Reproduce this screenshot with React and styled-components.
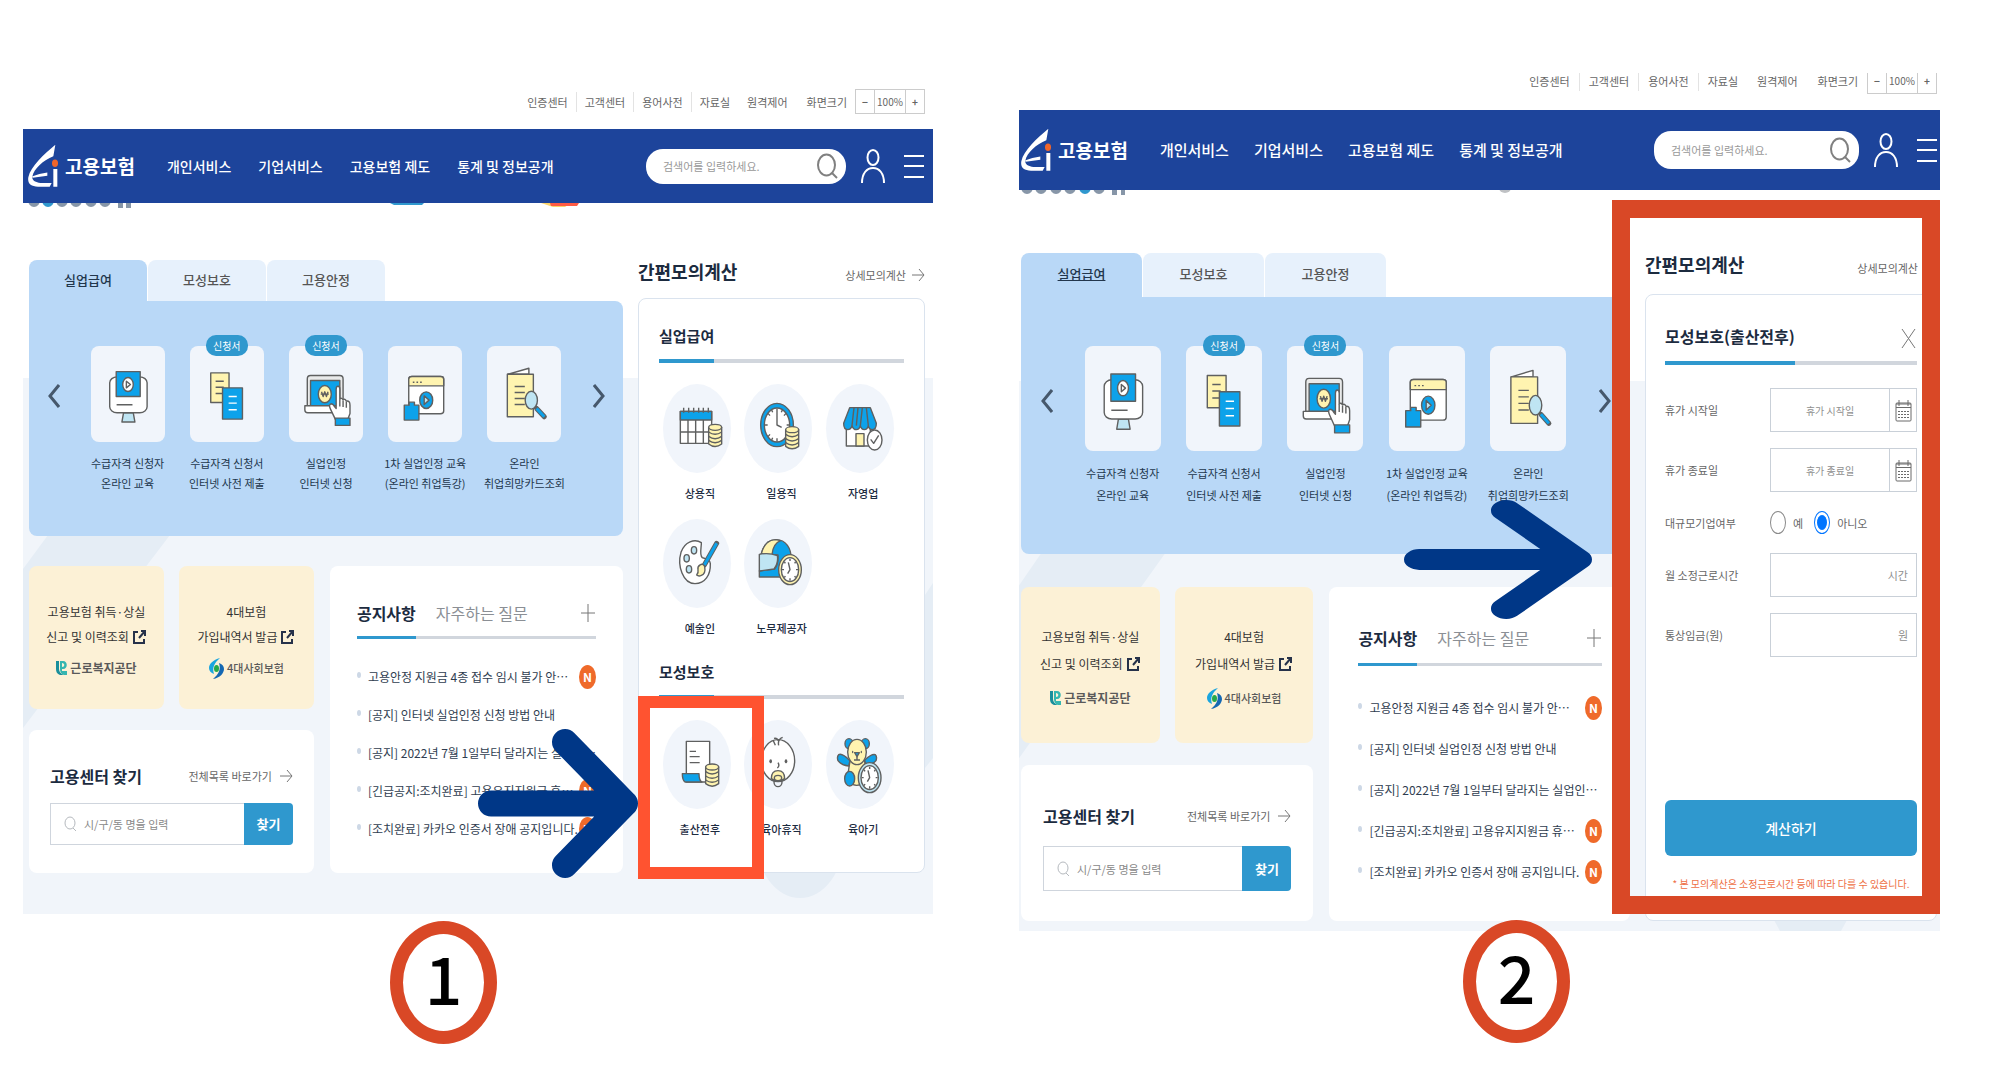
import React, { useState } from "react";
import styled, { createGlobalStyle, css, ThemeProvider } from "styled-components";

const GlobalStyle = createGlobalStyle`
  * {
    box-sizing: border-box;
  }

  body {
    margin: 0;
    background: #ffffff;
    color: #333333;
    font-family: "Noto Sans CJK KR", "Noto Sans", sans-serif;
    font-size: 11px;
    line-height: 18px;
  }

  a {
    color: inherit;
    text-decoration: none;
  }

  h2, h3, p, ul, figure {
    margin: 0;
    padding: 0;
    list-style: none;
  }

  button, input {
    margin: 0;
    padding: 0;
    border: 0;
    background: none;
    color: inherit;
    font: inherit;
  }

  button {
    cursor: pointer;
  }
`;

// the two captures were taken at slightly different zoom levels
const first = {
  top: 74,
  util: 55,
  utilPadding: "0 8px 0 0",
  utilGap: 8,
  zoomHeight: 25,
  header: 74,
  headerPadding: "0 9px 0 5px",
  nav: 14,
  navGap: 27,
  searchWidth: 200,
  searchHeight: 35,
  white: 175,
  body: "57px 8px 41px 6px",
  side: 287,
  tab: 41,
  tabWidth: 118,
  panel: 235,
  panelTop: 45,
  arrow: 49,
  card: 74,
  cardHeight: 96,
  line: 20,
  lowerGap: 30,
  box: 143,
  boxGap: 21,
  boxTop: 33,
  boxLine: 25,
  agencyTop: 7,
  findPadding: "35px 21px 0",
  findGap: 16,
  findInput: 42,
  noticePadding: "35px 27px 0",
  noticeGap: 11,
  listTop: 19,
  row: 38,
  sideHead: 38,
  cardTop: 26,
  cardGap: 12,
  badge: "7px 0 0 367px",
};

const second = {
  top: 73,
  util: 37,
  utilPadding: "0 3px 22px 0",
  utilGap: 9,
  zoomHeight: 27,
  header: 80,
  headerPadding: "0 3px 0 2px",
  nav: 15,
  navGap: 25,
  searchWidth: 205,
  searchHeight: 38,
  white: 191,
  body: "63px 3px 10px 2px",
  side: 292,
  tab: 44,
  tabWidth: 121,
  panel: 257,
  panelTop: 49,
  arrow: 51,
  card: 76,
  cardHeight: 105,
  line: 22,
  lowerGap: 33,
  box: 156,
  boxGap: 22,
  boxTop: 36,
  boxLine: 27,
  agencyTop: 9,
  findPadding: "40px 22px 0",
  findGap: 19,
  findInput: 45,
  noticePadding: "39px 28px 0 29px",
  noticeGap: 13,
  listTop: 21,
  row: 41,
  sideHead: 41,
  cardTop: 30,
  cardGap: 14,
  badge: "-11px 0 0 444px",
};

/* ---------- drawings ---------- */

const Drawing = styled.svg`
  display: block;
  width: 100%;
  height: 100%;
  fill: none;
  stroke: #5f6060;
  stroke-width: 1.4px;
  stroke-linejoin: round;

  * {
    vector-effect: non-scaling-stroke;
  }

  .blue { fill: #0da2ea; }
  .yellow { fill: #fff4b0; }
  .light { fill: #bfe5f3; }
  .white { fill: #ffffff; }
  .dark { fill: #5f6060; stroke: none; }
  .line { stroke: #ffffff; }
  .brush { stroke: #0da2ea; stroke-width: 3px; }
  .outline { stroke-width: 5px; stroke-linecap: round; }
`;

const cardIcons = {
  monitor: (
    <>
      <path className="light" d="M80 201h24l4 28H76z" />
      <rect className="white" x="46" y="93" width="92" height="108" rx="18" />
      <rect className="blue" x="62" y="77" width="59" height="75" />
      <ellipse className="white" cx="91" cy="116" rx="13" ry="21" />
      <path d="M87 106l10 10-10 10zM63 177h39" />
    </>
  ),
  papers: (
    <>
      <rect className="yellow" x="51" y="81" width="45" height="89" />
      <path d="M63 106h20M63 124h20M63 143h20" />
      <rect className="blue" x="80" y="126" width="49" height="94" />
      <path className="line" d="M95 152h20M95 172h20M95 192h20" />
    </>
  ),
  laptop: (
    <>
      <path fill="#e9eaea" d="M45 180V99q0-10 8-10h72q8 0 8 10v81z" />
      <rect className="blue" x="53" y="104" width="72" height="76" />
      <path className="white" d="M39 180h96v21H46q-7 0-7-8z" />
      <ellipse className="yellow" cx="88" cy="145" rx="16" ry="26" />
      <path d="M80 138l4 14 4-14 4 14 4-14M78 145h20" />
      <path
        className="white"
        d="M116 130q0-9 4.500-9t4.500 9v30q4-6 8 2 5-5 8 4 9-2 9 12v25l-6 20h-29l-13-33q-5-13 1-16 6 0 10 10l3 4z"
      />
      <path d="M125 160v22M133 164v20M141 168v18" />
      <rect className="blue" x="114" y="217" width="36" height="22" />
    </>
  ),
  browser: (
    <>
      <rect className="white" x="51" y="92" width="86" height="112" rx="8" />
      <path className="yellow" d="M51 120v-20q0-8 8-8h70q8 0 8 8v20z" />
      <path d="M61 109h4M70 109h4M79 109h4" />
      <ellipse className="blue" cx="94" cy="163" rx="16" ry="25" />
      <path className="light" d="M89 150l12 13-12 13z" />
      <path className="blue" d="M40 178h12v-9h13v9h11v45H40z" />
    </>
  ),
  booklet: (
    <>
      <path className="white" d="M51 85l52-18v18z" />
      <rect className="yellow" x="50" y="85" width="64" height="128" />
      <path d="M68 122h25M68 140h25M68 158h25M68 176h25" />
      <ellipse className="light" cx="109" cy="163" rx="15" ry="27" />
      <path className="outline" d="M122 188l19 25" />
      <path className="brush" d="M122 188l19 25" />
    </>
  ),
};

const Coins = ({ x, y }) => (
  <g transform={`translate(${x} ${y})`}>
    <path className="yellow" d="M0 9v50q19 15 39 0V9z" />
    <ellipse className="yellow" cx="19.500" cy="9" rx="19.500" ry="9" />
    <path d="M0 23q19 14 39 0M0 36q19 14 39 0M0 48q19 14 39 0" />
  </g>
);

const Watch = ({ x, y, rim }) => (
  <g transform={`translate(${x} ${y})`}>
    <ellipse className={rim} rx="34" ry="45" />
    <ellipse className="white" rx="26" ry="36" />
    <path d="M-5-22L0 0l-7 12M0-33v7M0 26v7M-24 0h6M18 0h6M-17-24l3 5M17-24l-3 5M-17 24l3-5M17 24l-3-5" />
  </g>
);

const bubbleIcons = {
  calendar: (
    <>
      <rect className="white" x="52" y="82" width="94" height="96" />
      <rect className="blue" x="52" y="82" width="94" height="26" />
      <path d="M62 71v15M77 71v15M92 71v15M107 71v15M121 71v15M136 71v15" />
      <path d="M75 108v70M98 108v70M121 108v70M52 144h94" />
      <Coins x={137} y={121} />
    </>
  ),
  clock: (
    <>
      <ellipse className="blue" cx="99" cy="123" rx="49" ry="65" />
      <ellipse className="white" cx="99" cy="123" rx="38" ry="51" />
      <path d="M99 74v49l14 7M99 163v10M62 123h9M128 123h9M72 88l6 7M126 88l-6 7M72 158l6-7M83 78l3 7M115 78l-3 7M83 168l3-7" />
      <Coins x={125} y={128} />
    </>
  ),
  store: (
    <>
      <rect className="white" x="61" y="120" width="72" height="66" />
      <rect className="yellow" x="90" y="149" width="24" height="37" />
      <path
        className="blue"
        d="M71 71h62l18 47q0 19-12 19-10 0-12-12-3 12-12 12t-12-12q-3 12-12 12t-13-12q-3 12-13 12-12 0-12-19z"
      />
      <path d="M84 71l-6 54M96 71l-5 54M109 71l-6 54M121 71l6 54" />
      <ellipse className="white" cx="146" cy="168" rx="22" ry="30" />
      <path d="M134 166l9 12 15-24" />
    </>
  ),
  palette: (
    <>
      <path
        className="white"
        d="M115 71C95 58 65 68 54 100c-12 40 6 94 42 94 30 0 47-26 46-60-2-18-16-14-24-18-10-8-2-34-3-45z"
      />
      <ellipse className="light" cx="93" cy="94" rx="8" ry="11" />
      <ellipse className="light" cx="71" cy="118" rx="8" ry="11" />
      <ellipse className="light" cx="78" cy="151" rx="8" ry="11" />
      <path className="outline" d="M161 73l-37 65" />
      <path className="brush" d="M161 73l-37 65" />
      <path className="yellow" d="M111 138q8-6 14 4 4 22-10 27-8 4-14-1 6-6 4-16t6-14z" />
    </>
  ),
  helmet: (
    <>
      <path className="blue" d="M52 104C60 74 78 62 96 62c30 0 46 26 46 60v52H46v-18l46-6q12-14 10-42z" />
      <path className="yellow" d="M52 104C60 74 78 62 96 62l14 3c-16 6-24 20-26 42z" />
      <path className="light" d="M46 106q28-6 54 4 4 22-10 40l-44 6z" />
      <Watch x={138} y={152} rim="yellow" />
    </>
  ),
  document: (
    <>
      <rect className="white" x="70" y="64" width="70" height="122" />
      <path d="M80 94h19M80 110h30M80 128h30" />
      <path className="blue" d="M58 161h50q0 20 9 25H66q-8-6-8-25z" />
      <Coins x={128} y={132} />
    </>
  ),
  baby: (
    <>
      <ellipse className="white" cx="102" cy="122" rx="50" ry="63" />
      <path d="M102 62q-2-9-12-7M104 76q-4-18 12-24M94 76l-6-14M102 128q6 10-2 16" />
      <ellipse className="dark" cx="80" cy="124" rx="4" ry="6" />
      <ellipse className="dark" cx="126" cy="124" rx="4" ry="6" />
      <path className="yellow" d="M82 176q0-24 20-24t20 24q-20 16-40 0z" />
      <ellipse cx="102" cy="186" rx="12" ry="14" />
      <ellipse className="yellow" cx="102" cy="174" rx="11" ry="8" />
    </>
  ),
  bear: (
    <>
      <ellipse className="blue" cx="69" cy="71" rx="12" ry="15" />
      <ellipse className="blue" cx="118" cy="71" rx="12" ry="15" />
      <path className="yellow" d="M72 122q22-10 44 0l6 40q-4 34-30 34-24 0-26-34z" />
      <path className="blue" d="M38 104q10-6 34 18l-4 16q-22-2-32-16-4-12 2-18zM148 104q-10-4-32 16l4 18q20-4 30-16 4-12-2-18z" />
      <ellipse className="yellow" cx="93" cy="96" rx="28" ry="38" />
      <ellipse className="dark" cx="80" cy="96" rx="2" ry="4" />
      <ellipse className="dark" cx="106" cy="96" rx="2" ry="4" />
      <path className="blue" d="M86 98h14l-7 12z" />
      <path d="M93 110v8M84 120h18" />
      <ellipse className="blue" cx="71" cy="176" rx="15" ry="22" />
      <Watch x={131} y={173} rim="light" />
    </>
  ),
};

const CardIcon = ({ name }) => (
  <Drawing viewBox="0 0 182 289" preserveAspectRatio="none" aria-hidden="true">
    {cardIcons[name]}
  </Drawing>
);

const BubbleIcon = ({ name }) => (
  <Drawing viewBox="0 0 204 267" preserveAspectRatio="none" aria-hidden="true">
    {bubbleIcons[name]}
  </Drawing>
);

const LineIcon = styled.svg`
  display: block;
  flex: none;
  width: ${(props) => props.$w}px;
  height: ${(props) => props.$h}px;
  fill: none;
  stroke: ${(props) => props.$color || "#777777"};
  stroke-width: ${(props) => props.$stroke || 1}px;

  * {
    vector-effect: non-scaling-stroke;
  }
`;

const ArrowIcon = () => (
  <LineIcon $w={13} $h={14} viewBox="0 0 13 14">
    <path d="M0 7h12M7 1l5 6-5 6" />
  </LineIcon>
);

const ExternalIcon = () => (
  <LineIcon $w={14} $h={16} $color="#26324a" $stroke={2} viewBox="0 0 14 16">
    <path d="M5 3H1v11h10v-4M6 9l6-7M8 2h4v5" />
  </LineIcon>
);

/* ---------- header ---------- */

const UtilBar = styled.nav`
  display: flex;
  align-items: center;
  justify-content: flex-end;
  height: ${({ theme }) => theme.util}px;
  padding: ${({ theme }) => theme.utilPadding};
  color: #666666;
  white-space: nowrap;
`;

const UtilLink = styled.a`
  padding: 0 ${({ theme }) => theme.utilGap}px;
  border-right: 1px solid ${(props) => (props.$plain ? "transparent" : "#e3e3e3")};
  line-height: 20px;
`;

const ZoomLabel = styled.span`
  padding: 0 ${({ theme }) => theme.utilGap}px 0 10px;
`;

const ZoomBox = styled.div`
  display: flex;
  height: ${({ theme }) => theme.zoomHeight}px;
  border: 1px solid #cccccc;
  font-size: 10px;

  button {
    width: 18px;
    font-weight: 700;
  }

  span {
    width: 32px;
    border: solid #cccccc;
    border-width: 0 1px;
    text-align: center;
    line-height: ${({ theme }) => theme.zoomHeight - 2}px;
  }
`;

const Header = styled.header`
  display: flex;
  align-items: center;
  height: ${({ theme }) => theme.header}px;
  padding: ${({ theme }) => theme.headerPadding};
  background: #1d449b;
  color: #ffffff;
  white-space: nowrap;
`;

const Logo = styled.a`
  display: flex;
  align-items: center;
  gap: 7px;
  font-size: 19px;
  font-weight: 700;
  line-height: 28px;

  svg {
    width: 30px;
    height: 44px;
  }
`;

const MainNav = styled.nav`
  display: flex;
  gap: ${({ theme }) => theme.navGap}px;
  margin-left: 32px;
  font-size: ${({ theme }) => theme.nav}px;
  font-weight: 500;
  line-height: 24px;
`;

const Search = styled.form`
  display: flex;
  align-items: center;
  width: ${({ theme }) => theme.searchWidth}px;
  height: ${({ theme }) => theme.searchHeight}px;
  margin-left: auto;
  padding: 0 8px 0 17px;
  border-radius: 17px;
  background: #ffffff;

  input {
    flex: 1;
    min-width: 0;
    color: #333333;
    outline: 0;
  }

  input::placeholder {
    color: #999999;
  }
`;

const HeaderButton = styled.button`
  margin-left: ${(props) => props.$gap}px;
`;

const Peek = styled.svg`
  position: absolute;
  top: 0;
  left: 0;
  width: 100%;
  height: 6px;
`;

/* ---------- body ---------- */

const Body = styled.main`
  position: relative;
  display: grid;
  grid-template-columns: minmax(0, 1fr) ${({ theme }) => theme.side}px;
  gap: 15px;
  padding: ${({ theme }) => theme.body};
  background: linear-gradient(#ffffff ${({ theme }) => theme.white}px, #f1f5fa ${({ theme }) => theme.white}px);
`;

const Backdrop = styled.svg`
  position: absolute;
  inset: 0;
  width: 100%;
  height: 100%;
  fill: #e5edf5;
`;

const Column = styled.div`
  position: relative;
  display: flex;
  flex-direction: column;
`;

const Tabs = styled.div`
  display: flex;
  gap: 1px;
`;

const Tab = styled.button`
  width: ${({ theme }) => theme.tabWidth}px;
  height: ${({ theme }) => theme.tab}px;
  padding-bottom: 2px;
  border-radius: 8px 8px 0 0;
  background: ${(props) => (props.$active ? "#b9d8f7" : "#e7f1fc")};
  color: ${(props) => (props.$active ? "#22364c" : "#555555")};
  font-size: 13px;
  font-weight: 500;
  text-decoration: ${(props) => (props.$underline ? "underline" : "none")};
`;

const Carousel = styled.section`
  display: grid;
  grid-template-columns: ${({ theme }) => theme.arrow}px 1fr ${({ theme }) => theme.arrow}px;
  align-items: start;
  height: ${({ theme }) => theme.panel}px;
  padding-top: ${({ theme }) => theme.panelTop}px;
  border-radius: 0 8px 8px 8px;
  background: #b9d8f7;
`;

const CarouselArrow = styled.button`
  display: flex;
  align-items: center;
  justify-content: center;
  height: ${({ theme }) => theme.cardHeight + 4}px;
`;

const CardList = styled.ul`
  display: grid;
  grid-template-columns: repeat(5, 1fr);
`;

const CardItem = styled.li`
  display: flex;
  flex-direction: column;
  align-items: center;
  gap: 11px;
  color: #22364c;
  line-height: ${({ theme }) => theme.line}px;
  text-align: center;
  white-space: nowrap;
`;

const CardTile = styled.div`
  position: relative;
  width: ${({ theme }) => theme.card}px;
  height: ${({ theme }) => theme.cardHeight}px;
  border-radius: 8px;
  background: #f1f5fb;
`;

const FormBadge = styled.span`
  position: absolute;
  top: -11px;
  left: 50%;
  width: 42px;
  margin-left: -21px;
  border-radius: 10px;
  background: #2f98ce;
  color: #ffffff;
  font-size: 10px;
  line-height: 21px;
`;

const Lower = styled.div`
  display: grid;
  grid-template-columns: 285fr 293fr;
  gap: 16px;
  margin-top: ${({ theme }) => theme.lowerGap}px;
`;

const Boxes = styled.div`
  display: grid;
  grid-template-columns: 1fr 1fr;
  grid-auto-rows: ${({ theme }) => theme.box}px;
  gap: ${({ theme }) => theme.boxGap}px 15px;
`;

const YellowBox = styled.a`
  padding-top: ${({ theme }) => theme.boxTop}px;
  border-radius: 8px;
  background: #fcf1d6;
  font-size: 12px;
  line-height: ${({ theme }) => theme.boxLine}px;
  text-align: center;
  white-space: nowrap;
`;

const BoxLine = styled.span`
  display: flex;
  align-items: center;
  justify-content: center;
  gap: 4px;
`;

const Agency = styled(BoxLine)`
  margin-top: ${({ theme }) => theme.agencyTop}px;
  gap: 3px;
  color: #5a5a5a;
  font-size: ${(props) => (props.$small ? 11 : 12)}px;
  font-weight: ${(props) => (props.$small ? 500 : 700)};
  line-height: 24px;
`;

const FindCard = styled.section`
  grid-column: 1 / 3;
  padding: ${({ theme }) => theme.findPadding};
  border-radius: 8px;
  background: #ffffff;
`;

const FindHead = styled.div`
  display: flex;
  align-items: center;
  justify-content: space-between;

  h2 {
    color: #1c2b3f;
    font-size: 16px;
    font-weight: 700;
    line-height: 22px;
  }
`;

const MoreLink = styled.a`
  display: flex;
  align-items: center;
  gap: 8px;
  color: #666666;
  white-space: nowrap;
`;

const FindForm = styled.form`
  display: flex;
  height: ${({ theme }) => theme.findInput}px;
  margin-top: ${({ theme }) => theme.findGap}px;

  label {
    display: flex;
    flex: 1;
    align-items: center;
    gap: 7px;
    min-width: 0;
    padding-left: 13px;
    border: 1px solid #cfd5dd;
    border-right: 0;
  }

  input {
    flex: 1;
    min-width: 0;
    outline: 0;
  }

  input::placeholder {
    color: #888888;
  }

  button {
    width: 49px;
    border-radius: 0 4px 4px 0;
    background: #2f98ce;
    color: #ffffff;
    font-size: 13px;
    font-weight: 700;
  }
`;

const Notice = styled.section`
  padding: ${({ theme }) => theme.noticePadding};
  border-radius: 8px;
  background: #ffffff;
`;

const NoticeTabs = styled.div`
  display: flex;
  align-items: flex-start;
  gap: 20px;
  border-bottom: 3px solid #d1d6dd;
`;

const NoticeTab = styled.button`
  margin-bottom: -3px;
  padding-bottom: ${({ theme }) => theme.noticeGap}px;
  border-bottom: 3px solid ${(props) => (props.$active ? "#2f98ce" : "transparent")};
  color: ${(props) => (props.$active ? "#1c2b3f" : "#8b8f95")};
  font-size: 16px;
  font-weight: ${(props) => (props.$active ? 700 : 400)};
  line-height: 24px;
  white-space: nowrap;
`;

const PlusButton = styled.button`
  margin: 3px 1px 0 auto;
`;

const NoticeList = styled.ul`
  margin-top: ${({ theme }) => theme.listTop}px;
`;

const NoticeItem = styled.li`
  display: flex;
  align-items: center;
  height: ${({ theme }) => theme.row}px;
  color: #2f3d50;
  font-size: 12px;
  white-space: nowrap;

  &::before {
    content: "";
    width: 4px;
    height: 6px;
    margin: 0 7px 4px 0;
    border-radius: 50%;
    background: #cdd8e6;
  }
`;

const NewMark = styled.span`
  width: 17px;
  height: 24px;
  margin-left: auto;
  border-radius: 50%;
  background: #ef6a2a;
  color: #ffffff;
  font-size: 12px;
  font-weight: 700;
  line-height: 23px;
  text-align: center;
`;

/* ---------- calculator ---------- */

const SideHead = styled.div`
  display: flex;
  justify-content: space-between;
  height: ${({ theme }) => theme.sideHead}px;

  h2 {
    color: #1c2b3f;
    font-size: 18px;
    font-weight: 700;
    line-height: 22px;
    white-space: nowrap;
  }

  a {
    height: 30px;
    gap: 6px;
  }
`;

const CalcCard = styled.section`
  display: flex;
  flex: 1;
  flex-direction: column;
  padding: ${({ theme }) => theme.cardTop}px ${(props) => props.$inset}px 27px;
  border: 1px solid #dae3ee;
  border-radius: 8px;
  background: #ffffff;
`;

const GroupHead = styled.div`
  display: flex;
  align-items: flex-start;
  justify-content: space-between;
  margin-top: ${(props) => props.$gap || 0}px;
  border-bottom: 4px solid #d1d6dd;

  h3 {
    margin-bottom: -4px;
    padding-bottom: ${({ theme }) => theme.cardGap}px;
    border-bottom: 4px solid #2f98ce;
    color: #1c2b3f;
    font-size: ${(props) => props.$size}px;
    font-weight: 700;
    line-height: 22px;
  }
`;

const BubbleGrid = styled.ul`
  display: grid;
  grid-template-columns: repeat(3, 1fr);
  gap: 17px 0;
  margin-top: 21px;
`;

const BubbleItem = styled.li`
  display: flex;
  flex-direction: column;
  align-items: center;
  gap: 11px;
  color: #1c2b3f;
  font-weight: 500;
`;

const Bubble = styled.div`
  width: 68px;
  height: 89px;
  margin-right: 6px;
  border-radius: 50%;
  background: #f1f5fb;
`;

const CalcForm = styled.form`
  display: grid;
  grid-template-columns: 105px minmax(0, 1fr);
  flex: 1;
  grid-template-rows: 44px 44px 29px 44px 44px 1fr;
  align-items: center;
  gap: 16px 0;
  margin-top: 23px;
  color: #666666;
`;

const Field = styled.div`
  display: flex;
  height: 44px;
  border: 1px solid #c9d0d8;

  input {
    flex: 1;
    min-width: 0;
    padding: 0 8px;
    text-align: ${(props) => (props.$date ? "center" : "right")};
    outline: 0;
  }

  input::placeholder {
    color: #8f8f8f;
    font-size: ${(props) => (props.$date ? 10 : 11)}px;
  }

  button {
    display: flex;
    align-items: center;
    justify-content: center;
    width: 27px;
    border-left: 1px solid #c9d0d8;
  }
`;

const Choices = styled.div`
  display: flex;
  align-items: center;
  gap: 11px;

  label {
    display: flex;
    align-items: center;
    gap: 7px;
  }

  input {
    appearance: none;
    width: 16px;
    height: 23px;
    padding: 3px 2px;
    border: 1px solid #8a8a8a;
    border-radius: 50%;
  }

  input:checked {
    border-color: #0075ff;
  }

  input:checked::before {
    content: "";
    display: block;
    width: 10px;
    height: 15px;
    border-radius: 50%;
    background: #0075ff;
  }
`;

const SubmitArea = styled.div`
  grid-column: 1 / 3;
  align-self: end;

  button {
    width: 100%;
    height: 56px;
    border-radius: 6px;
    background: #2f98ce;
    color: #ffffff;
    font-size: 14px;
    font-weight: 500;
  }

  p {
    margin-top: 19px;
    color: #ee6f45;
    font-size: 10px;
    text-align: center;
    white-space: nowrap;
  }
`;

/* ---------- guide marks drawn over the captures ---------- */

const Highlight = styled.div`
  position: absolute;
  z-index: 2;
  pointer-events: none;
  ${(props) =>
    props.$tall
      ? css`
          top: 127px;
          right: 0;
          width: 328px;
          height: 714px;
          border: 18px solid #d94826;
        `
      : css`
          bottom: -6px;
          left: 0;
          width: 126px;
          height: 183px;
          border: 12px solid #ff5330;
        `}
`;

const Pointer = styled.svg`
  position: absolute;
  z-index: 3;
  top: ${(props) => props.$top}px;
  right: ${(props) => props.$right}px;
  width: ${(props) => props.$w}px;
  height: ${(props) => props.$h}px;
  fill: none;
  stroke: #003787;
  stroke-width: 26px;
  stroke-linecap: round;
  stroke-linejoin: round;
`;

const GuideArrow = (props) => (
  <Pointer viewBox="0 0 160 149" preserveAspectRatio="none" aria-hidden="true" {...props}>
    <path d="M13 74.500h134M87 13l60 61.500-60 61.500" />
  </Pointer>
);

const StepNumber = styled.figcaption`
  position: relative;
  width: 107px;
  height: 123px;
  margin: ${({ theme }) => theme.badge};
  border: 13px solid #d94826;
  border-radius: 50%;
  background: #ffffff;
  color: #000000;
  font-size: 66px;
  font-weight: 500;
  line-height: 84px;
  text-align: center;
`;

const Page = styled.div`
  display: grid;
  grid-template-columns: minmax(0, 910fr) minmax(0, 921fr);
  gap: 86px;
  padding: 0 60px 36px 23px;
`;

const Step = styled.figure`
  padding-top: ${({ theme }) => theme.top}px;
`;

const Screen = styled.div`
  position: relative;
  overflow: hidden;
`;

const utilLinks = ["인증센터", "고객센터", "용어사전", "자료실", "원격제어"];
const navLinks = ["개인서비스", "기업서비스", "고용보험 제도", "통계 및 정보공개"];
const tabNames = ["실업급여", "모성보호", "고용안정"];

const services = [
  { icon: "monitor", lines: ["수급자격 신청자", "온라인 교육"] },
  { icon: "papers", lines: ["수급자격 신청서", "인터넷 사전 제출"], form: true },
  { icon: "laptop", lines: ["실업인정", "인터넷 신청"], form: true },
  { icon: "browser", lines: ["1차 실업인정 교육", "(온라인 취업특강)"] },
  { icon: "booklet", lines: ["온라인", "취업희망카드조회"] },
];

const notices = [
  { text: "고용안정 지원금 4종 접수 임시 불가 안⋯", isNew: true },
  { text: "[공지] 인터넷 실업인정 신청 방법 안내" },
  { text: "[공지] 2022년 7월 1일부터 달라지는 실업인⋯" },
  { text: "[긴급공지:조치완료] 고용유지지원금 휴⋯", isNew: true },
  { text: "[조치완료] 카카오 인증서 장애 공지입니다.", isNew: true },
];

const jobs = [
  { icon: "calendar", name: "상용직" },
  { icon: "clock", name: "일용직" },
  { icon: "store", name: "자영업" },
  { icon: "palette", name: "예술인" },
  { icon: "helmet", name: "노무제공자" },
];

const parents = [
  { icon: "document", name: "출산전후" },
  { icon: "baby", name: "육아휴직" },
  { icon: "bear", name: "육아기" },
];

const TopArea = () => (
  <>
    <UtilBar aria-label="바로가기">
      {utilLinks.map((name, index) => (
        <UtilLink href="#" key={name} $plain={index > 2}>
          {name}
        </UtilLink>
      ))}
      <ZoomLabel>화면크기</ZoomLabel>
      <ZoomBox>
        <button type="button" aria-label="축소">−</button>
        <span>100%</span>
        <button type="button" aria-label="확대">+</button>
      </ZoomBox>
    </UtilBar>
    <Header>
      <Logo href="#">
        <svg viewBox="0 0 90 130" preserveAspectRatio="none" aria-hidden="true">
          <path
            fill="#ffffff"
            d="M82 2L76 36C46 48 18 72 13 96c-2 12 10 18 24 19h34l-6 11H30C8 125-2 116 1 98 8 66 48 30 82 2z"
          />
          <path fill="#ffffff" d="M12 96c14-6 30-10 46-12v10l-44 6zM76 74h12v52H76z" />
          <ellipse fill="#f0652a" cx="81" cy="57" rx="9" ry="11" />
        </svg>
        고용보험
      </Logo>
      <MainNav>
        {navLinks.map((name) => (
          <a href="#" key={name}>{name}</a>
        ))}
      </MainNav>
      <Search>
        <input type="text" aria-label="검색어" placeholder="검색어를 입력하세요." />
        <button type="button" aria-label="검색">
          <LineIcon $w={21} $h={26} $color="#808080" $stroke={2} viewBox="0 0 21 26">
            <ellipse cx="9.500" cy="12" rx="8.500" ry="10.500" />
            <path d="M15 20l5 5" />
          </LineIcon>
        </button>
      </Search>
      <HeaderButton type="button" aria-label="로그인" $gap={15}>
        <LineIcon $w={24} $h={35} $color="#ffffff" $stroke={2} viewBox="0 0 24 35">
          <ellipse cx="12" cy="8.500" rx="5.500" ry="7.500" />
          <path d="M1 34C1 24 6 19 12 19s11 5 11 15" />
        </LineIcon>
      </HeaderButton>
      <HeaderButton type="button" aria-label="전체메뉴" $gap={19}>
        <LineIcon $w={20} $h={25} $color="#ffffff" $stroke={2} viewBox="0 0 20 25">
          <path d="M0 2h20M0 12h20M0 23h20" />
        </LineIcon>
      </HeaderButton>
    </Header>
  </>
);

const ServiceArea = ({ underline }) => {
  const [tab, setTab] = useState(0);

  return (
    <Column>
      <Tabs>
        {tabNames.map((name, index) => (
          <Tab
            type="button"
            key={name}
            $active={index === tab}
            $underline={underline && index === tab}
            onClick={() => setTab(index)}
          >
            {name}
          </Tab>
        ))}
      </Tabs>
      <Carousel>
        <CarouselArrow type="button" aria-label="이전">
          <LineIcon $w={12} $h={24} $color="#46586c" $stroke={3} viewBox="0 0 12 24">
            <path d="M11 1L2 12l9 11" />
          </LineIcon>
        </CarouselArrow>
        <CardList>
          {services.map(({ icon, lines, form }) => (
            <CardItem key={icon}>
              <CardTile>
                {form && <FormBadge>신청서</FormBadge>}
                <CardIcon name={icon} />
              </CardTile>
              <a href="#">
                {lines[0]}
                <br />
                {lines[1]}
              </a>
            </CardItem>
          ))}
        </CardList>
        <CarouselArrow type="button" aria-label="다음">
          <LineIcon $w={12} $h={24} $color="#46586c" $stroke={3} viewBox="0 0 12 24">
            <path d="M1 1l9 11-9 11" />
          </LineIcon>
        </CarouselArrow>
      </Carousel>
      <Lower>
        <Boxes>
          <YellowBox href="#">
            <BoxLine>고용보험 취득·상실</BoxLine>
            <BoxLine>
              신고 및 이력조회 <ExternalIcon />
            </BoxLine>
            <Agency>
              <svg width="11" height="16" viewBox="0 0 11 16" aria-hidden="true">
                <path fill="#1a8f9c" d="M0 1h3v8c0 3 2 5 5 6H4C1 14 0 12 0 9z" />
                <path fill="#35b6b0" d="M4 1h3c5 0 5 8 0 8H6v2h5v4H8c-3-1-4-3-4-6zm2 2v4c3 0 3-4 0-4z" />
              </svg>
              근로복지공단
            </Agency>
          </YellowBox>
          <YellowBox href="#">
            <BoxLine>4대보험</BoxLine>
            <BoxLine>
              가입내역서 발급 <ExternalIcon />
            </BoxLine>
            <Agency $small>
              <svg width="15" height="21" viewBox="0 0 15 21" aria-hidden="true">
                <path fill="#19a5df" d="M11 0C4 2 0 6 0 10c0 3 2 5 5 6-2-6 0-11 6-16z" />
                <path fill="#1468b3" d="M4 21c7-1 11-6 11-10 0-3-2-5-5-6 2 6 0 11-6 16z" />
                <ellipse fill="#25a84a" cx="7.500" cy="10.500" rx="2.500" ry="3.500" />
              </svg>
              4대사회보험
            </Agency>
          </YellowBox>
          <FindCard>
            <FindHead>
              <h2>고용센터 찾기</h2>
              <MoreLink href="#">
                전체목록 바로가기 <ArrowIcon />
              </MoreLink>
            </FindHead>
            <FindForm>
              <label>
                <LineIcon $w={13} $h={16} $color="#b5b9be" viewBox="0 0 13 16">
                  <ellipse cx="6" cy="7" rx="5" ry="6" />
                  <path d="M9 12l3 3" />
                </LineIcon>
                <input type="text" aria-label="지역명" placeholder="시/구/동 명을 입력" />
              </label>
              <button type="button">찾기</button>
            </FindForm>
          </FindCard>
        </Boxes>
        <Notice>
          <NoticeTabs>
            <NoticeTab type="button" $active>공지사항</NoticeTab>
            <NoticeTab type="button">자주하는 질문</NoticeTab>
            <PlusButton type="button" aria-label="더보기">
              <LineIcon $w={14} $h={18} viewBox="0 0 14 18">
                <path d="M7 0v18M0 9h14" />
              </LineIcon>
            </PlusButton>
          </NoticeTabs>
          <NoticeList>
            {notices.map(({ text, isNew }) => (
              <NoticeItem key={text}>
                <a href="#">{text}</a>
                {isNew && <NewMark>N</NewMark>}
              </NoticeItem>
            ))}
          </NoticeList>
        </Notice>
      </Lower>
    </Column>
  );
};

const SideTitle = () => (
  <SideHead>
    <h2>간편모의계산</h2>
    <MoreLink href="#">
      상세모의계산 <ArrowIcon />
    </MoreLink>
  </SideHead>
);

const Bubbles = ({ items }) => (
  <BubbleGrid>
    {items.map(({ icon, name }) => (
      <BubbleItem key={icon}>
        <Bubble>
          <BubbleIcon name={icon} />
        </Bubble>
        <a href="#">{name}</a>
      </BubbleItem>
    ))}
  </BubbleGrid>
);

const DateField = ({ id, placeholder }) => (
  <Field $date>
    <input id={id} type="text" placeholder={placeholder} />
    <button type="button" aria-label={`${placeholder} 선택`}>
      <LineIcon $w={17} $h={23} $color="#6b6b6b" viewBox="0 0 17 23">
        <rect x="1" y="4" width="15" height="18" rx="1" />
        <path d="M1 8.500h15M1 5h15M4 1v6M13 1v6" />
        <path strokeDasharray="2 1" d="M3 12.500h11M3 15.500h11M3 18.500h11" />
      </LineIcon>
    </button>
  </Field>
);

const LeaveForm = () => {
  const [large, setLarge] = useState("no");

  return (
    <CalcForm>
      <label htmlFor="leave-start">휴가 시작일</label>
      <DateField id="leave-start" placeholder="휴가 시작일" />
      <label htmlFor="leave-end">휴가 종료일</label>
      <DateField id="leave-end" placeholder="휴가 종료일" />
      <span id="large-company">대규모기업여부</span>
      <Choices role="radiogroup" aria-labelledby="large-company">
        <label>
          <input type="radio" name="large" checked={large === "yes"} onChange={() => setLarge("yes")} />예
        </label>
        <label>
          <input type="radio" name="large" checked={large === "no"} onChange={() => setLarge("no")} />
          아니오
        </label>
      </Choices>
      <label htmlFor="hours">월 소정근로시간</label>
      <Field>
        <input id="hours" type="text" placeholder="시간" />
      </Field>
      <label htmlFor="wage">통상임금(원)</label>
      <Field>
        <input id="wage" type="text" placeholder="원" />
      </Field>
      <SubmitArea>
        <button type="button">계산하기</button>
        <p>* 본 모의계산은 소정근로시간 등에 따라 다를 수 있습니다.</p>
      </SubmitArea>
    </CalcForm>
  );
};

const App = () => (
  <>
    <GlobalStyle />
    <Page>
      <ThemeProvider theme={first}>
        <Step>
          <Screen>
            <TopArea />
            <Body>
              <Backdrop viewBox="0 0 910 711" preserveAspectRatio="none" aria-hidden="true">
                <path d="M25 332h122L0 525V366zM910 380l-20 30v170l20-25z" />
                <ellipse cx="777" cy="635" rx="44" ry="60" />
              </Backdrop>
              <Peek viewBox="0 0 910 6" preserveAspectRatio="none" aria-hidden="true">
                <g fill="#8796a8">
                  <ellipse cx="11" cy="-3" rx="6" ry="7" />
                  <ellipse cx="39" cy="-3" rx="6" ry="7" />
                  <ellipse cx="53" cy="-3" rx="6" ry="7" />
                  <ellipse cx="68" cy="-3" rx="6" ry="7" />
                  <ellipse cx="82" cy="-3" rx="6" ry="7" />
                  <path d="M95 0h5v5h-5zM103 0h5v5h-5z" />
                </g>
                <ellipse fill="#2f98ce" cx="25" cy="-3" rx="6" ry="7" />
                <path fill="#2f98ce" d="M367 0h34l-2 2h-28z" />
                <path fill="#fbd36a" d="M518 0h30l-6 4h-12z" />
                <path fill="#ff5b45" d="M527 0h29l-2 3h-26z" />
              </Peek>
              <ServiceArea />
              <Column>
                <SideTitle />
                <CalcCard $inset={20}>
                  <GroupHead $size={15}>
                    <h3>실업급여</h3>
                  </GroupHead>
                  <Bubbles items={jobs} />
                  <GroupHead $size={15} $gap={24}>
                    <h3>모성보호</h3>
                  </GroupHead>
                  <Bubbles items={parents} />
                </CalcCard>
                <Highlight />
              </Column>
            </Body>
            <GuideArrow $top={655} $right={295} $w={160} $h={149} />
          </Screen>
          <StepNumber>1</StepNumber>
        </Step>
      </ThemeProvider>
      <ThemeProvider theme={second}>
        <Step>
          <Screen>
            <TopArea />
            <Body>
              <Backdrop viewBox="0 0 921 742" preserveAspectRatio="none" aria-hidden="true">
                <path d="M22 364h124L0 569V396zM755 731h73l-6 11h-61z" />
              </Backdrop>
              <Peek viewBox="0 0 921 6" preserveAspectRatio="none" aria-hidden="true">
                <g fill="#8796a8">
                  <ellipse cx="8" cy="-3" rx="6" ry="7" />
                  <ellipse cx="22" cy="-3" rx="6" ry="7" />
                  <ellipse cx="37" cy="-3" rx="6" ry="7" />
                  <ellipse cx="51" cy="-3" rx="6" ry="7" />
                  <ellipse cx="80" cy="-3" rx="6" ry="7" />
                  <path d="M93 0h5v5h-5zM102 0h4v5h-4z" />
                </g>
                <ellipse fill="#2f98ce" cx="66" cy="-3" rx="6" ry="7" />
                <ellipse fill="#bfc1c4" cx="486" cy="-2" rx="6" ry="5" />
              </Peek>
              <ServiceArea underline />
              <Column>
                <SideTitle />
                <CalcCard $inset={19}>
                  <GroupHead $size={16}>
                    <h3>모성보호(출산전후)</h3>
                    <button type="button" aria-label="닫기">
                      <LineIcon $w={16} $h={24} viewBox="0 0 16 24">
                        <path d="M1 4l13 19M14 4L1 23" />
                      </LineIcon>
                    </button>
                  </GroupHead>
                  <LeaveForm />
                </CalcCard>
              </Column>
            </Body>
            <Highlight $tall />
            <GuideArrow $top={427} $right={348} $w={188} $h={119} />
          </Screen>
          <StepNumber>2</StepNumber>
        </Step>
      </ThemeProvider>
    </Page>
  </>
);

export default App;
